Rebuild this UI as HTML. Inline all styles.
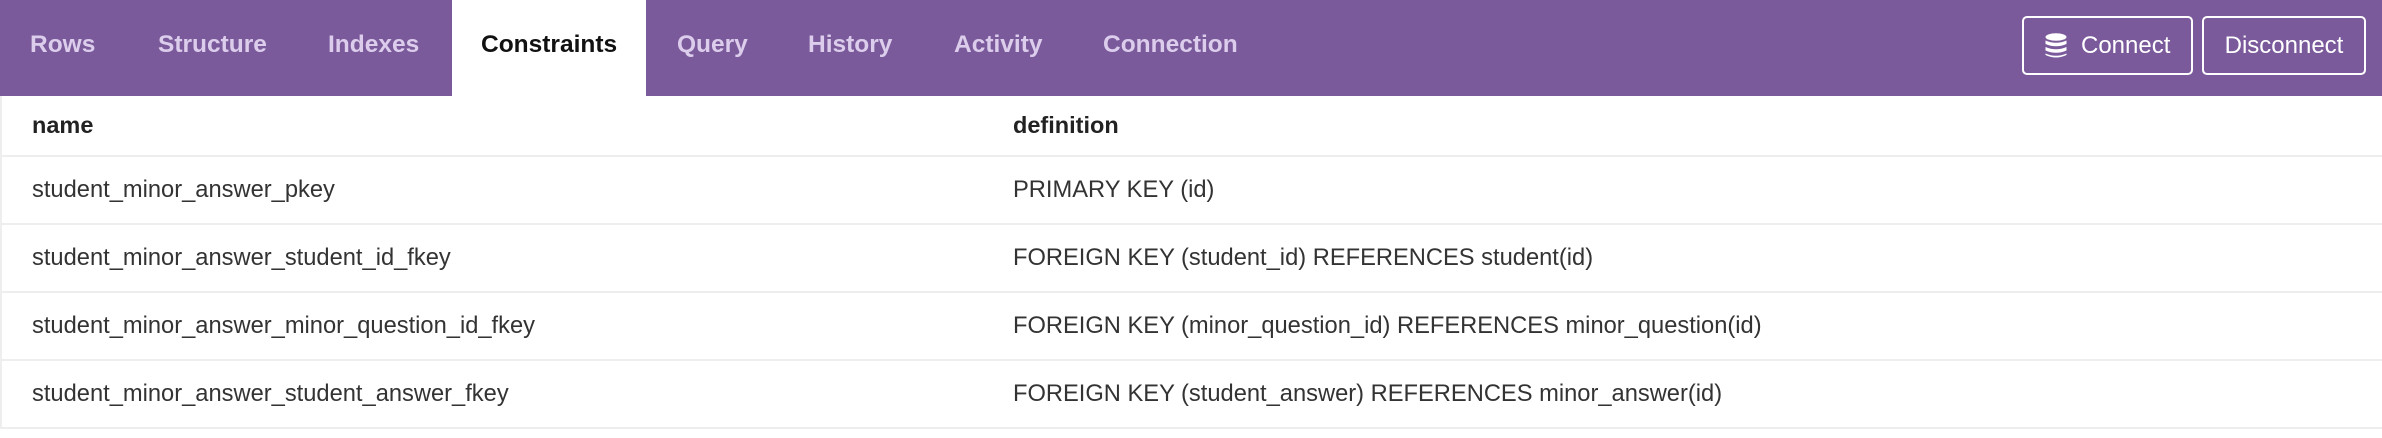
<!DOCTYPE html>
<html><head><meta charset="utf-8"><style>
*{margin:0;padding:0;box-sizing:border-box}
html,body{width:2382px;height:438px;overflow:hidden;background:#fff;font-family:"Liberation Sans",Arial,sans-serif}
.bar{position:absolute;left:0;top:0;width:2382px;height:96px;background:#7b5a9c}
.tab{position:absolute;top:0;height:96px;line-height:90px;font-size:24.5px;font-weight:bold;color:#dbcdeb}
.active{background:#fff;color:#111;left:452px;width:194px;padding-left:29px}
.btn{position:absolute;top:16px;height:59px;border:2px solid #fff;border-radius:5px;color:#fff;font-size:24px;line-height:55px}
.tbl{position:absolute;left:0;top:96px;width:2382px;border-left:2px solid #eee}
.row{position:relative;height:68px;border-bottom:2px solid #eeeeee;font-size:23.7px;color:#333}
.row span{position:absolute;top:0;line-height:66px}
.hd{height:61px;font-weight:bold;color:#222;font-size:23.5px}
.hd span{line-height:59px}
</style></head><body>
<div class="bar">
<div class="tab" style="left:30px">Rows</div>
<div class="tab" style="left:158px">Structure</div>
<div class="tab" style="left:328px">Indexes</div>
<div class="tab active">Constraints</div>
<div class="tab" style="left:677px">Query</div>
<div class="tab" style="left:808px">History</div>
<div class="tab" style="left:954px">Activity</div>
<div class="tab" style="left:1103px">Connection</div>
<div class="btn" style="left:2022px;width:171px">
<svg style="position:absolute;left:21px;top:15px" width="22" height="26" viewBox="0 0 22 26"><g fill="#fff"><ellipse cx="11" cy="4" rx="10.5" ry="3.8"/><path d="M0.5 7.5Q11 12 21.5 7.5V11Q11 15.5 0.5 11Z"/><path d="M0.5 14Q11 18.5 21.5 14V17.5Q11 22 0.5 17.5Z"/><path d="M0.5 20.5Q11 25 21.5 20.5V22Q11 27 0.5 22Z"/></g></svg>
<span style="position:absolute;left:57px">Connect</span></div>
<div class="btn" style="left:2202px;width:164px;text-align:center">Disconnect</div>
</div>
<div class="tbl">
<div class="row hd"><span style="left:30px">name</span><span style="left:1011px">definition</span></div>
<div class="row"><span style="left:30px">student_minor_answer_pkey</span><span style="left:1011px">PRIMARY KEY (id)</span></div>
<div class="row"><span style="left:30px">student_minor_answer_student_id_fkey</span><span style="left:1011px">FOREIGN KEY (student_id) REFERENCES student(id)</span></div>
<div class="row"><span style="left:30px">student_minor_answer_minor_question_id_fkey</span><span style="left:1011px">FOREIGN KEY (minor_question_id) REFERENCES minor_question(id)</span></div>
<div class="row"><span style="left:30px">student_minor_answer_student_answer_fkey</span><span style="left:1011px">FOREIGN KEY (student_answer) REFERENCES minor_answer(id)</span></div>
</div>
</body></html>
